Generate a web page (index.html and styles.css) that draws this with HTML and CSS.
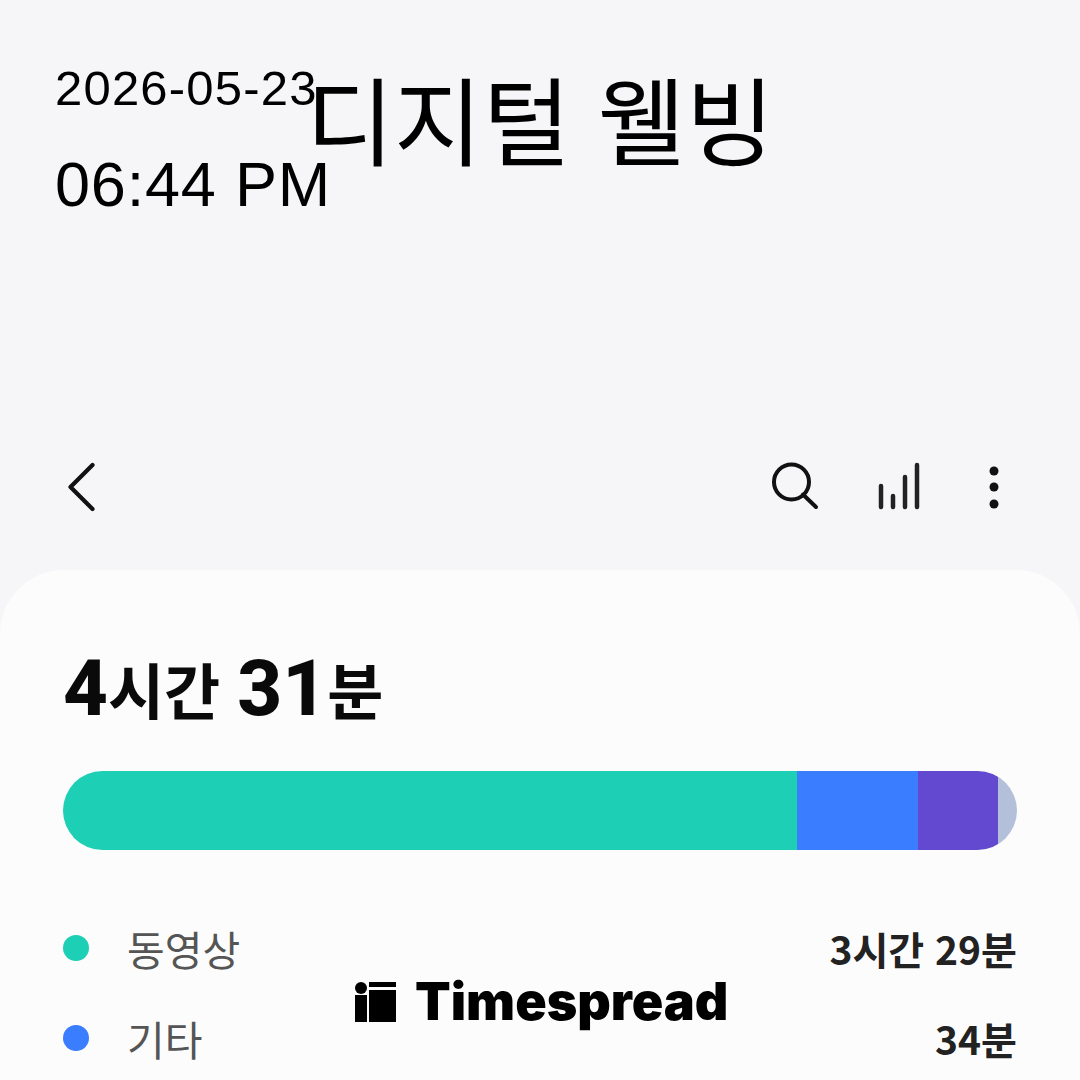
FILE: index.html
```html
<!DOCTYPE html>
<html lang="ko">
<head>
    <meta charset="UTF-8">
    <meta name="viewport" content="width=device-width, initial-scale=1.0">
    <title>디지털 웰빙</title>
    <link rel="stylesheet" href="styles.css">
</head>
<body>
    <div class="main">
        <div class="stamp">
            <div class="stamp-date">2026-05-23</div>
            <div class="stamp-time">06:44 PM</div>
        </div>

        <h1 class="title">디지털 웰빙</h1>

        <div class="appbar">
            <svg class="back" width="36" height="56" viewBox="0 0 36 56">
                <path d="M28.500 7 L6.500 29 L28.500 51" fill="none" stroke="#111" stroke-width="4.200" stroke-linecap="round" stroke-linejoin="round"/>
            </svg>
            <div class="actions">
                <svg width="50" height="50" viewBox="0 0 50 50">
                    <circle cx="21.5" cy="21" r="17.5" fill="none" stroke="#111" stroke-width="4"/>
                    <path d="M33 33.500 L46 46" fill="none" stroke="#111" stroke-width="4" stroke-linecap="round"/>
                </svg>
                <svg width="44" height="50" viewBox="0 0 44 50">
                    <path d="M4 25 V46 M16 35 V46 M28 16 V46 M40 4 V46" fill="none" stroke="#222" stroke-width="4.500" stroke-linecap="round"/>
                </svg>
                <svg width="32" height="50" viewBox="0 0 32 50">
                    <circle cx="16" cy="10" r="4.5" fill="#111"/>
                    <circle cx="16" cy="26" r="4.5" fill="#111"/>
                    <circle cx="16" cy="43" r="4.5" fill="#111"/>
                </svg>
            </div>
        </div>

        <div class="card">
            <div class="total"><b>4</b>시간 <b>31</b>분</div>

            <div class="bar">
                <div class="seg seg-video"></div>
                <div class="seg seg-other"></div>
                <div class="seg seg-purple"></div>
                <div class="seg seg-rest"></div>
            </div>

            <div class="legend">
                <div class="legend-row">
                    <span class="dot dot-video"></span>
                    <span class="legend-name">동영상</span>
                    <span class="legend-time">3시간 29분</span>
                </div>
                <div class="legend-row">
                    <span class="dot dot-other"></span>
                    <span class="legend-name">기타</span>
                    <span class="legend-time">34분</span>
                </div>
            </div>
        </div>

        <div class="brand">
            <svg width="41" height="40" viewBox="0 0 41 40">
                <circle cx="6" cy="6" r="6" fill="#000"/>
                <rect x="0" y="13" width="12" height="27" fill="#000"/>
                <rect x="14" y="0" width="27" height="5" fill="#000"/>
                <rect x="14" y="8" width="27" height="32" fill="#000"/>
            </svg>
            <span class="brand-name">Timespread</span>
        </div>
    </div>
</body>
</html>
```

FILE: styles.css
```css
* {
    box-sizing: border-box;
    margin: 0;
    padding: 0;
}
html, body {
    height: 100%;
}
body {
    background-color: #f6f6f8;
    overflow: hidden;
}
.main {
    position: relative;
    width: 1080px;
    height: 1080px;
    overflow: hidden;
    display: flex;
    flex-direction: column;
    font-family: "Noto Sans CJK KR", "Noto Sans", sans-serif;
    color: #111;
}

/* overlay stamp */
.stamp {
    position: absolute;
    left: 55px;
    top: 55px;
    font-family: "Liberation Sans", Arial, sans-serif;
    color: #000;
}
.stamp-date {
    font-size: 49px;
    line-height: 66px;
    letter-spacing: 1.2px;
}
.stamp-time {
    font-size: 63px;
    line-height: 72px;
    letter-spacing: 0.8px;
    margin-top: 27px;
}

.title {
    font-size: 96px;
    font-weight: 400;
    line-height: 130px;
    color: #000;
    text-align: center;
    margin-top: 52px;
}

.appbar {
    display: flex;
    justify-content: space-between;
    align-items: center;
    margin-top: 276px;
    height: 56px;
    padding: 0 70px 0 64px;
}
.actions {
    display: flex;
    align-items: center;
    gap: 57px;
}

.card {
    flex: 1;
    margin-top: 56px;
    background-color: #fcfcfc;
    border-radius: 64px 64px 0 0;
    padding: 80px 63px 0;
}
.total {
    font-size: 61px;
    font-weight: 700;
    line-height: 78px;
    height: 78px;
    color: #0a0a0a;
}
.total b {
    font-family: "Roboto", sans-serif;
    font-size: 78px;
    font-weight: 800;
}

.bar {
    display: flex;
    height: 79px;
    width: 954px;
    margin-top: 43px;
    border-radius: 40px;
    overflow: hidden;
}
.seg-video {
    width: 734px;
    background-color: #1dcfb5;
}
.seg-other {
    width: 121px;
    background-color: #3a7dff;
}
.seg-purple {
    width: 80px;
    background-color: #6249cf;
}
.seg-rest {
    flex: 1;
    background-color: #b4c0da;
}

.legend {
    margin-top: 53px;
}
.legend-row {
    display: flex;
    align-items: center;
    height: 90px;
    font-size: 41px;
}
.dot {
    width: 26px;
    height: 26px;
    border-radius: 50%;
    margin-right: 38px;
}
.dot-video {
    background-color: #1dcfb5;
}
.dot-other {
    background-color: #3a7dff;
}
.legend-name {
    color: #555;
}
.legend-time {
    margin-left: auto;
    font-weight: 700;
    font-size: 39px;
    color: #222;
}

/* watermark */
.brand {
    position: absolute;
    left: 355px;
    top: 982px;
    display: flex;
    align-items: center;
    gap: 19px;
}
.brand-name {
    font-family: "Inter", sans-serif;
    font-size: 52px;
    font-weight: 900;
    line-height: 40px;
    color: #000;
}
```
